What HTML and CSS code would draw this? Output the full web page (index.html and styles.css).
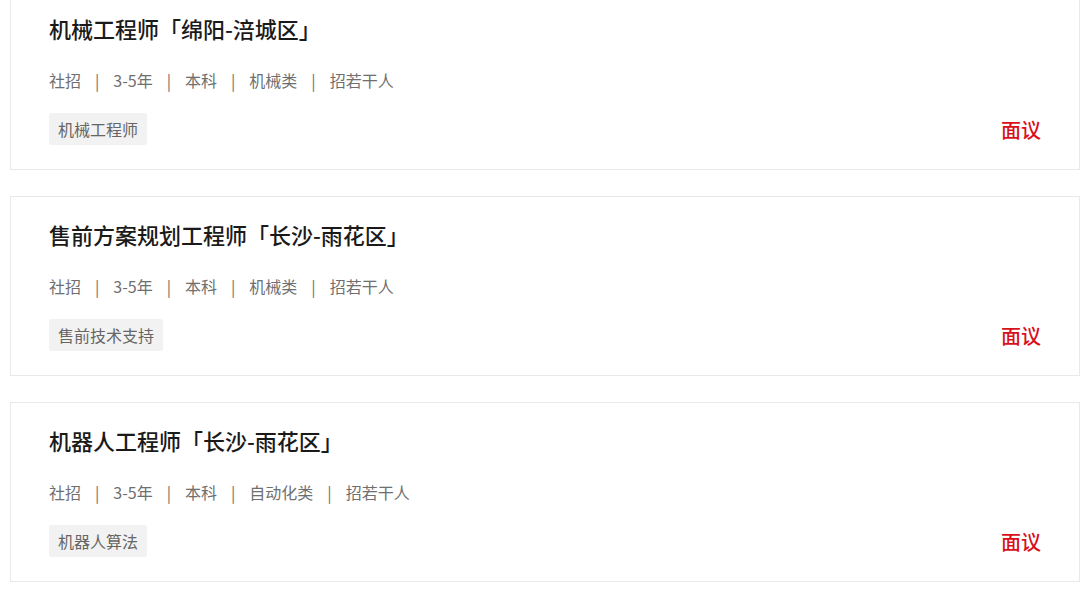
FILE: index.html
```html
<!DOCTYPE html>
<html lang="zh-CN">
<head>
    <meta charset="UTF-8">
    <meta name="viewport" content="width=device-width, initial-scale=1.0">
    <title>招聘职位</title>
    <link rel="stylesheet" href="styles.css">
</head>
<body>
    <div class="job-list">
        <div class="job-card">
            <h3 class="job-title">机械工程师「绵阳-涪城区」</h3>
            <div class="job-meta">
                <span>社招</span><span class="sep">|</span><span>3-5年</span><span class="sep">|</span><span>本科</span><span class="sep">|</span><span>机械类</span><span class="sep">|</span><span>招若干人</span>
            </div>
            <div class="job-bottom">
                <span class="job-tag">机械工程师</span>
                <span class="job-salary">面议</span>
            </div>
        </div>

        <div class="job-card">
            <h3 class="job-title">售前方案规划工程师「长沙-雨花区」</h3>
            <div class="job-meta">
                <span>社招</span><span class="sep">|</span><span>3-5年</span><span class="sep">|</span><span>本科</span><span class="sep">|</span><span>机械类</span><span class="sep">|</span><span>招若干人</span>
            </div>
            <div class="job-bottom">
                <span class="job-tag">售前技术支持</span>
                <span class="job-salary">面议</span>
            </div>
        </div>

        <div class="job-card">
            <h3 class="job-title">机器人工程师「长沙-雨花区」</h3>
            <div class="job-meta">
                <span>社招</span><span class="sep">|</span><span>3-5年</span><span class="sep">|</span><span>本科</span><span class="sep">|</span><span>自动化类</span><span class="sep">|</span><span>招若干人</span>
            </div>
            <div class="job-bottom">
                <span class="job-tag">机器人算法</span>
                <span class="job-salary">面议</span>
            </div>
        </div>
    </div>
</body>
</html>
```

FILE: styles.css
```css
* {
    margin: 0;
    padding: 0;
    box-sizing: border-box;
}

body {
    font-family: "Noto Sans CJK SC", "Noto Sans", sans-serif;
    background: #fff;
    color: #222;
}

.job-list {
    margin-top: -10px;
    padding-left: 10px;
    display: flex;
    flex-direction: column;
    gap: 26px;
}

.job-card {
    height: 180px;
    border: 1px solid #e9e9e9;
    background: #fff;
    padding: 22px 38px 23px 38px;
}

.job-title {
    font-size: 22px;
    font-weight: 500;
    line-height: 30px;
    color: #1a1a1a;
}

.job-meta {
    margin-top: 25px;
    font-size: 16px;
    line-height: 24px;
    color: #6f6f6f;
}

.job-meta .sep {
    margin: 0 14px;
}

.job-bottom {
    margin-top: 21px;
    display: flex;
    justify-content: space-between;
    align-items: center;
}

.job-tag {
    background: #f2f2f2;
    color: #666;
    font-size: 16px;
    line-height: 32px;
    padding: 0 9px;
    border-radius: 2px;
}

.job-salary {
    color: #d9101a;
    font-size: 20px;
    font-weight: 500;
}
```
